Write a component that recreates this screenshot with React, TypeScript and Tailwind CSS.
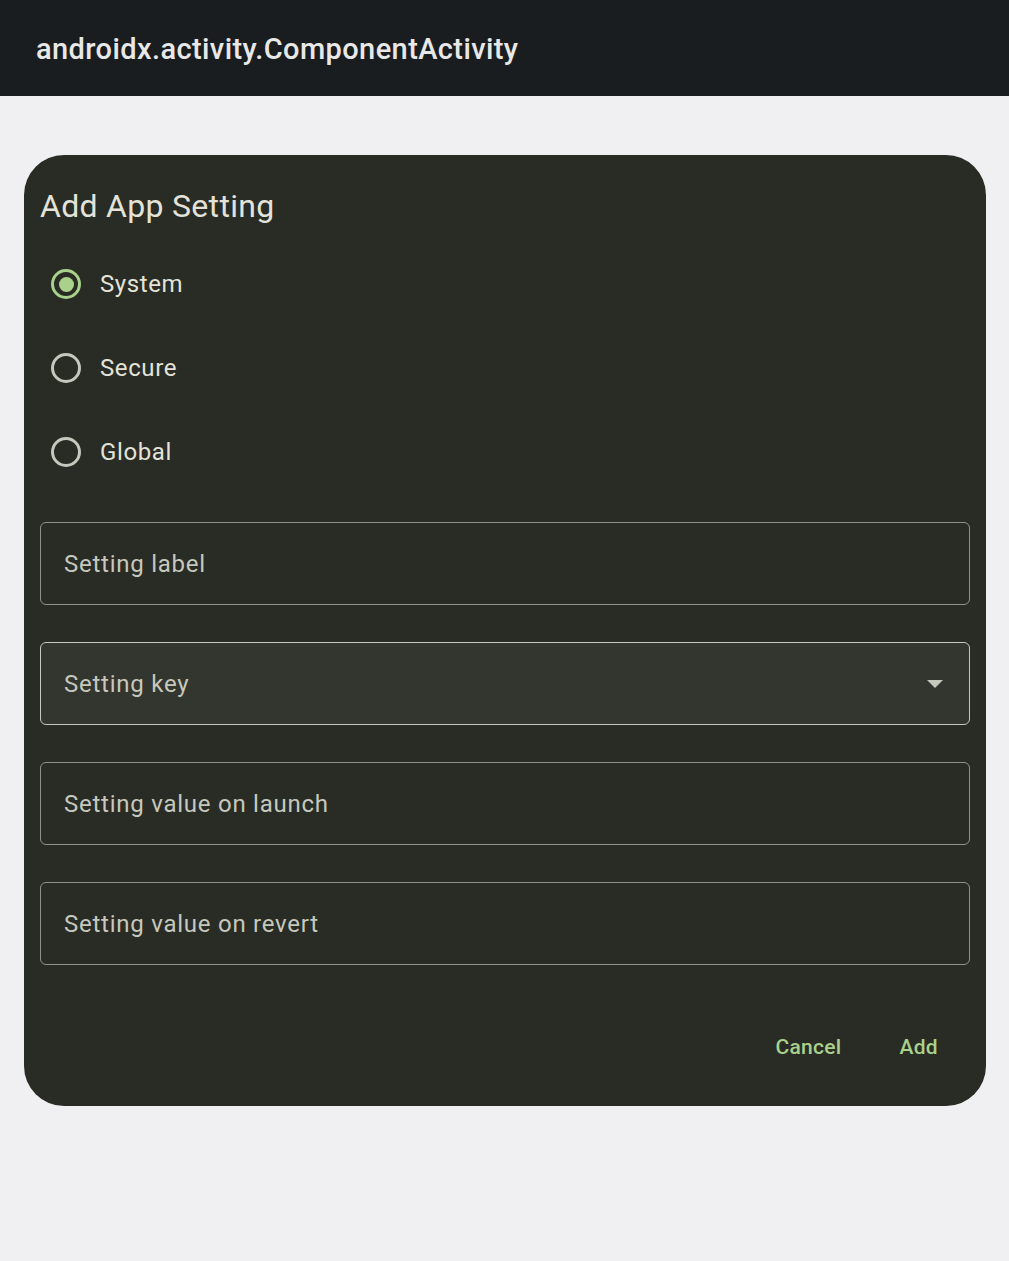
import { useState } from "react";

const fields = [
  { label: "Setting label" },
  { label: "Setting key", dropdown: true },
  { label: "Setting value on launch" },
  { label: "Setting value on revert" },
];

function Radio({ label, checked, onSelect }: { label: string; checked: boolean; onSelect: () => void }) {
  return (
    <button type="button" onClick={onSelect} className="flex h-[84px] items-center gap-[19px] pl-[11px] text-left">
      <span
        className={
          checked
            ? "flex h-[30px] w-[30px] items-center justify-center rounded-full border-[3px] border-[#a9d18c]"
            : "flex h-[30px] w-[30px] items-center justify-center rounded-full border-[3px] border-[#c6c8bd]"
        }
      >
        {checked ? <span className="h-[15px] w-[15px] rounded-full bg-[#a9d18c]" /> : null}
      </span>
      <span className="text-[24px] tracking-[0.6px] text-[#e3e3d9]">{label}</span>
    </button>
  );
}

function Field({ label, dropdown }: { label: string; dropdown?: boolean }) {
  return (
    <div
      className={
        dropdown
          ? "flex h-[83px] items-center justify-between rounded-[6px] border-[1.5px] border-[#c6c8bd] bg-[#33352f] pl-[23px] pr-[26px]"
          : "flex h-[83px] items-center justify-between rounded-[6px] border-[1.5px] border-[#8f9288] pl-[23px] pr-[26px]"
      }
    >
      <span className="text-[24px] tracking-[0.75px] text-[#c6c8bd]">{label}</span>
      {dropdown ? (
        <svg width="16" height="8" viewBox="0 0 16 8">
          <path d="M0 0 L16 0 L8 8 Z" fill="#c6c8bd" />
        </svg>
      ) : null}
    </div>
  );
}

export default function App() {
  const [selected, setSelected] = useState("System");

  return (
    <div className="min-h-[1261px] bg-[#f0f0f2] font-['Roboto',sans-serif]">
      <header className="flex h-[96px] items-center bg-[#1a1d20] px-[36px] pt-[4px]">
        <h1 className="text-[29px] font-medium tracking-[0.4px] text-[#e8e8e8]">
          androidx.activity.ComponentActivity
        </h1>
      </header>

      <div className="pl-[24px] pr-[23px] pt-[59px]">
        <div className="rounded-[40px] bg-[#292b25] pb-[42px] pl-[16px] pr-[16px] pt-[27px]">
          <h2 className="text-[32px] leading-[48px] tracking-[0.3px] text-[#e3e3d9]">Add App Setting</h2>

          <div className="mt-[12px] flex flex-col">
            {["System", "Secure", "Global"].map((name) => (
              <Radio key={name} label={name} checked={selected === name} onSelect={() => setSelected(name)} />
            ))}
          </div>

          <div className="mt-[28px] flex flex-col gap-[37px]">
            {fields.map((f) => (
              <Field key={f.label} label={f.label} dropdown={f.dropdown} />
            ))}
          </div>

          <div className="mt-[67px] flex justify-end gap-[58px] pr-[32px]">
            <button type="button" className="text-[21px] font-medium tracking-[0.3px] text-[#a9d18c]">
              Cancel
            </button>
            <button type="button" className="text-[21px] font-medium tracking-[0.3px] text-[#a9d18c]">
              Add
            </button>
          </div>
        </div>
      </div>
    </div>
  );
}
